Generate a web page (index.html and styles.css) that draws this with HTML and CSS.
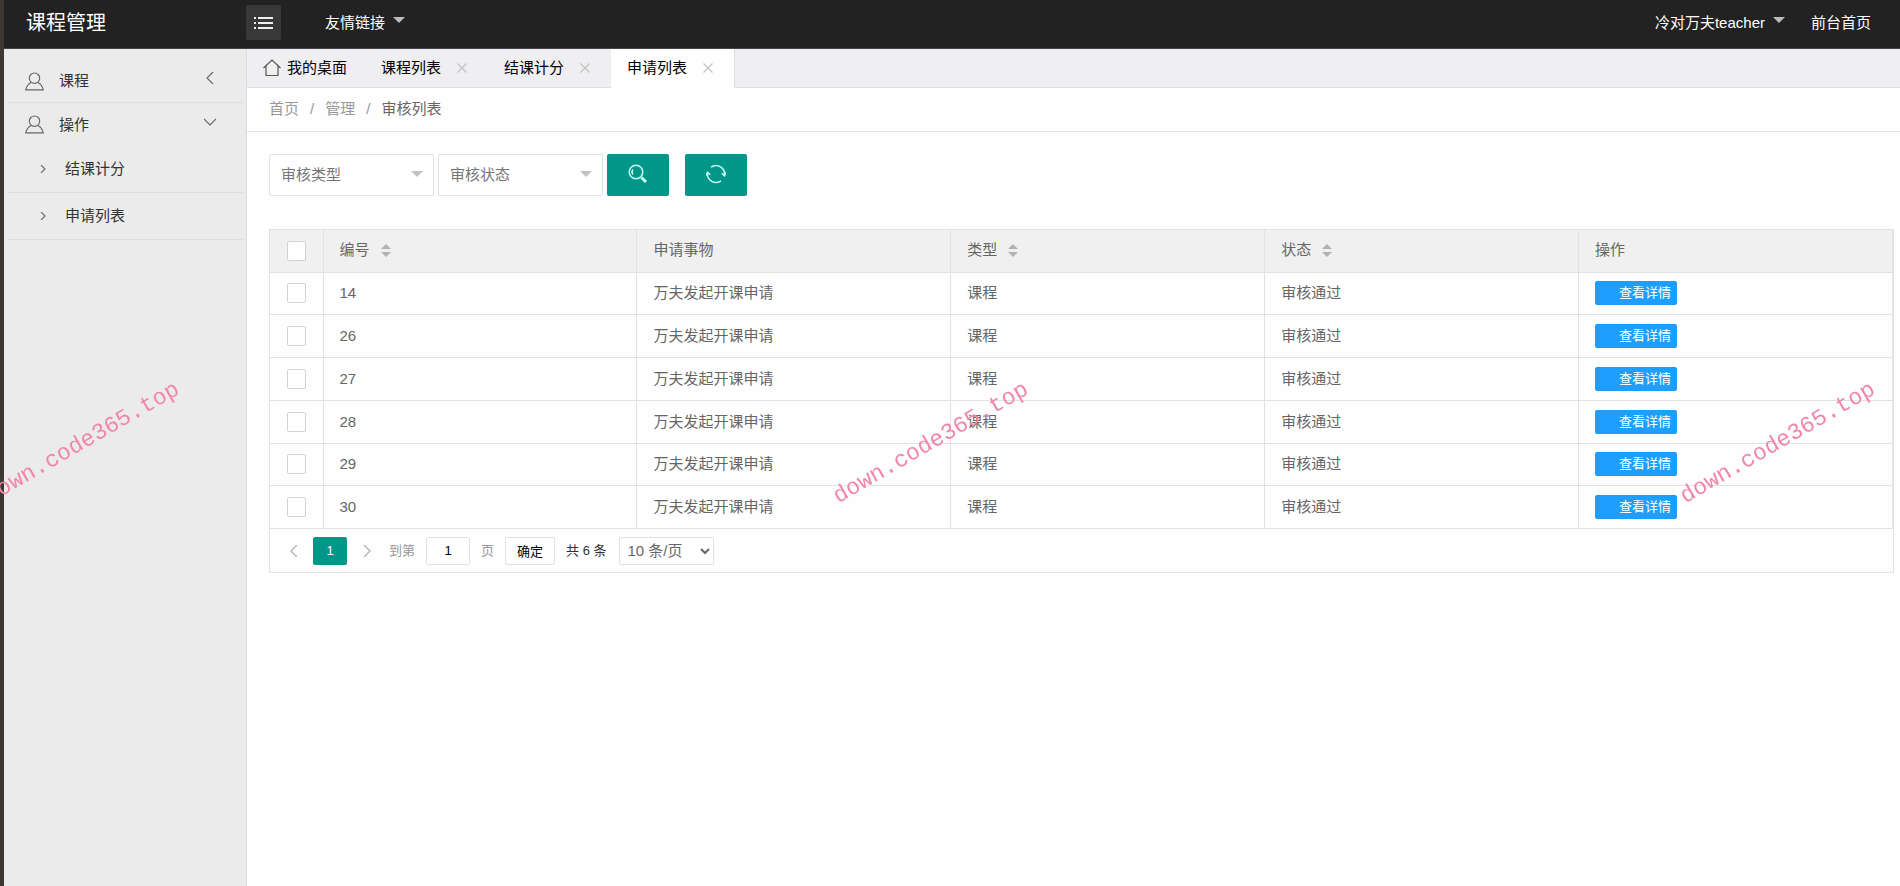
FILE: index.html
```html
<!DOCTYPE html>
<html lang="zh-CN">
<head>
  <meta charset="UTF-8" />
  <meta name="viewport" content="width=device-width, initial-scale=1.0"/>
  <title>课程管理</title>
  <link rel="stylesheet" href="styles.css">
</head>
<body>

<!-- Icons -->
<svg class="sprite" aria-hidden="true">
  <symbol id="user" viewBox="0 0 20 20">
    <circle cx="10" cy="6.500" r="5.500"/>
    <path d="M6.500 11C3.500 12.500 1.500 15 .8 18.800h18.400c-.7-3.800-2.700-6.300-5.700-7.800"/>
  </symbol>
  <symbol id="left" viewBox="0 0 12 12"><path d="M9 0L3 6l6 6"/></symbol>
  <symbol id="right" viewBox="0 0 12 12"><path d="M3 0l6 6-6 6"/></symbol>
  <symbol id="down" viewBox="0 0 12 12"><path d="M0 3l6 6 6-6"/></symbol>
  <symbol id="close" viewBox="0 0 10 10"><path d="M.5.5l9 9M9.500.5l-9 9"/></symbol>
</svg>

<!-- Header -->
<header class="header">
  <a class="logo" href="#">课程管理</a>
  <button class="menu-toggle" id="menuToggle" aria-label="展开菜单">
    <svg width="20" height="14" viewBox="0 0 20 14"><path d="M4 2h15M4 7h15M4 12h15M0 2h2M0 7h2M0 12h2"/></svg>
  </button>
  <a class="nav-link" href="#">友情链接<i class="caret"></i></a>
  <nav class="nav-right">
    <a class="nav-link" href="#">冷对万夫teacher<i class="caret"></i></a>
    <a class="nav-link" href="#">前台首页</a>
  </nav>
</header>

<div class="layout">
  <!-- Sidebar -->
  <aside class="sidebar" id="sidebar">
    <a class="menu-item line" href="#">
      <svg class="icon user"><use href="#user"/></svg>课程
      <svg class="icon arrow"><use href="#left"/></svg>
    </a>
    <a class="menu-item" href="#">
      <svg class="icon user"><use href="#user"/></svg>操作
      <svg class="icon arrow"><use href="#down"/></svg>
    </a>
    <a class="sub-item" href="#"><svg class="icon small"><use href="#right"/></svg>结课计分</a>
    <a class="sub-item" href="#"><svg class="icon small"><use href="#right"/></svg>申请列表</a>
  </aside>

  <main class="main">
    <!-- Tabs -->
    <div class="tabs">
      <div class="tab home">
        <svg class="icon house" viewBox="0 0 18 18"><path d="M.5 9L9 1l8.500 8M3 7v9.500h12V7"/></svg>
        <a href="#">我的桌面</a>
      </div>
      <div class="tab"><a href="#">课程列表</a><button aria-label="关闭"><svg class="icon close"><use href="#close"/></svg></button></div>
      <div class="tab"><a href="#">结课计分</a><button aria-label="关闭"><svg class="icon close"><use href="#close"/></svg></button></div>
      <div class="tab active"><a href="#">申请列表</a><button aria-label="关闭"><svg class="icon close"><use href="#close"/></svg></button></div>
    </div>

    <!-- Breadcrumb -->
    <nav class="breadcrumb">
      <a href="#">首页</a><span>/</span><a href="#">管理</a><span>/</span><a class="current" href="#">审核列表</a>
    </nav>

    <div class="content">
      <!-- Search -->
      <form class="search" id="searchForm">
        <div class="select">
          <select aria-label="审核类型"><option>审核类型</option></select>
        </div>
        <div class="select">
          <select aria-label="审核状态"><option>审核状态</option></select>
        </div>
        <button class="btn" type="submit" aria-label="搜索">
          <svg width="20" height="20" viewBox="0 0 20 20"><circle cx="8" cy="8" r="6.800"/><path d="M5 5.500a4 4 0 0 0 0 5"/><path class="thick" d="M13.500 13.500l4.500 4.500"/></svg>
        </button>
        <button class="btn refresh" type="reset" aria-label="刷新">
          <svg width="20" height="20" viewBox="0 0 20 20"><path d="M5 3.200A8.500 8.500 0 0 1 18.400 11.500M15 16.800A8.500 8.500 0 0 1 1.600 8.500"/><path d="M15.800 9.200l2.600 2.600 1.400-3.300M4.200 10.800L1.600 8.200.2 11.500"/></svg>
        </button>
      </form>

      <!-- Table -->
      <div class="table-box">
        <table>
          <thead>
            <tr>
              <th class="check"><input type="checkbox" id="checkAll" aria-label="全选"></th>
              <th>编号<i class="sort"></i></th>
              <th>申请事物</th>
              <th>类型<i class="sort"></i></th>
              <th>状态<i class="sort"></i></th>
              <th>操作</th>
            </tr>
          </thead>
          <tbody>
            <tr>
              <td class="check"><input type="checkbox" aria-label="选择 14"></td>
              <td>14</td><td>万夫发起开课申请</td><td>课程</td><td>审核通过</td>
              <td><button class="detail">查看详情</button></td>
            </tr>
            <tr>
              <td class="check"><input type="checkbox" aria-label="选择 26"></td>
              <td>26</td><td>万夫发起开课申请</td><td>课程</td><td>审核通过</td>
              <td><button class="detail">查看详情</button></td>
            </tr>
            <tr>
              <td class="check"><input type="checkbox" aria-label="选择 27"></td>
              <td>27</td><td>万夫发起开课申请</td><td>课程</td><td>审核通过</td>
              <td><button class="detail">查看详情</button></td>
            </tr>
            <tr>
              <td class="check"><input type="checkbox" aria-label="选择 28"></td>
              <td>28</td><td>万夫发起开课申请</td><td>课程</td><td>审核通过</td>
              <td><button class="detail">查看详情</button></td>
            </tr>
            <tr>
              <td class="check"><input type="checkbox" aria-label="选择 29"></td>
              <td>29</td><td>万夫发起开课申请</td><td>课程</td><td>审核通过</td>
              <td><button class="detail">查看详情</button></td>
            </tr>
            <tr>
              <td class="check"><input type="checkbox" aria-label="选择 30"></td>
              <td>30</td><td>万夫发起开课申请</td><td>课程</td><td>审核通过</td>
              <td><button class="detail">查看详情</button></td>
            </tr>
          </tbody>
        </table>

        <!-- Pagination -->
        <div class="pager">
          <button class="page-arrow" aria-label="上一页"><svg class="icon"><use href="#left"/></svg></button>
          <button class="page-current">1</button>
          <button class="page-arrow" aria-label="下一页"><svg class="icon"><use href="#right"/></svg></button>
          <label class="skip">到第<input type="text" value="1">页</label>
          <button class="confirm">确定</button>
          <span class="count">共 6 条</span>
          <select class="limit" aria-label="每页条数"><option>10 条/页</option></select>
        </div>
      </div>
    </div>
  </main>
</div>

<div class="watermark">
  <span>down.code365.top</span>
  <span>down.code365.top</span>
  <span>down.code365.top</span>
</div>

<script>
  // Sidebar toggle
  document.getElementById("menuToggle").addEventListener("click", () => {
    document.getElementById("sidebar").classList.toggle("hidden");
  });

  // Select all rows
  document.getElementById("checkAll").addEventListener("change", function() {
    document.querySelectorAll("tbody input").forEach(box => box.checked = this.checked);
  });

  document.getElementById("searchForm").addEventListener("submit", e => e.preventDefault());
</script>

</body>
</html>
```

FILE: styles.css
```css
* { margin: 0; padding: 0; box-sizing: border-box; }
body {
  font-family: "Liberation Sans", "Noto Sans CJK SC", sans-serif;
  font-size: 15px;
  line-height: 22px;
  color: #666;
  background: #fefefe;
  border-left: 4px solid #3b3836;
  display: flex;
  flex-direction: column;
  min-height: 100vh;
}

a {
  color: inherit;
  text-decoration: none;
}

button, input, select {
  font-family: inherit;
}

button {
  cursor: pointer;
}

.sprite {
  display: none;
}

svg {
  fill: none;
  stroke: currentColor;
  stroke-width: 1.2;
}

.icon {
  width: 12px;
  height: 12px;
  flex: none;
  overflow: visible;
}

/* Header */
.header {
  height: 49px;
  padding: 0 29px 3px 22px;
  background: #222;
  border-bottom: 1px solid #444;
  color: #fff;
  display: flex;
  align-items: center;
}

.logo {
  width: 220px;
  font-size: 20px;
}

.menu-toggle {
  width: 35px;
  height: 35px;
  margin-right: 44px;
  background: #383838;
  border: none;
  border-radius: 2px;
  color: #eee;
  display: flex;
  align-items: center;
  justify-content: center;
}

.menu-toggle svg {
  stroke-width: 2;
}

.nav-link {
  display: flex;
  gap: 8px;
}

.nav-right {
  margin-left: auto;
  display: flex;
  gap: 26px;
}

.caret {
  height: 6px;
  margin-top: 5px;
  border: 6px solid transparent;
  border-top-color: #bbb;
}

/* Sidebar */
.layout {
  flex: 1;
  display: flex;
}

.sidebar {
  width: 243px;
  padding: 11px 3px 0 4px;
  background: #ebebeb;
  border-right: 1px solid #dcdcdc;
  color: #333;
}

.sidebar.hidden {
  display: none;
}

.menu-item {
  height: 43px;
  padding: 0 27px 0 17px;
  display: flex;
  align-items: center;
}

.line, .sub-item {
  border-bottom: 1px solid #dedede;
}

.user {
  width: 19px;
  height: 19px;
  margin-right: 15px;
  color: #666;
}

.arrow {
  margin-left: auto;
  margin-bottom: 6px;
  color: #666;
}

.sub-item {
  height: 47px;
  padding-left: 31px;
  display: flex;
  align-items: center;
  gap: 18px;
}

.small {
  width: 8px;
  height: 8px;
  color: #777;
  stroke-width: 2;
}

/* Tabs */
.main {
  flex: 1;
  min-width: 0;
}

.tabs {
  height: 39px;
  background: #efeef0;
  border-bottom: 1px solid #dfdfdf;
  color: #000;
  display: flex;
}

.tab {
  height: 39px;
  padding: 0 21px 2px 16px;
  display: flex;
  align-items: center;
  gap: 16px;
}

.tab button {
  background: none;
  border: none;
  color: #c2c2c2;
  display: flex;
}

.tab.home {
  gap: 6px;
  padding-right: 18px;
}

.tab.active {
  background: #fefefe;
  border-right: 1px solid #dfdfdf;
}

.house {
  width: 18px;
  height: 18px;
  color: #555;
}

.close {
  width: 10px;
  height: 10px;
}

/* Breadcrumb */
.breadcrumb {
  height: 44px;
  padding: 0 22px 2px;
  border-bottom: 1px solid #e2e2e2;
  color: #999;
  display: flex;
  align-items: center;
  gap: 11px;
}

.current {
  color: #666;
}

/* Search */
.content {
  padding: 22px 6px 22px 22px;
}

.search {
  display: flex;
  gap: 4px;
  margin-bottom: 33px;
}

.select {
  position: relative;
  width: 165px;
}

.select select {
  width: 100%;
  height: 42px;
  padding: 0 11px 2px;
  font-size: 15px;
  color: #757575;
  background: #fff;
  border: 1px solid #e2e2e2;
  border-radius: 2px;
  appearance: none;
}

.select::after {
  content: "";
  position: absolute;
  right: 11px;
  top: 17px;
  border: 6px solid transparent;
  border-top-color: #c2c2c2;
  pointer-events: none;
}

.btn {
  width: 62px;
  height: 42px;
  padding-bottom: 3px;
  background: #009688;
  border: none;
  border-radius: 2px;
  color: #c8fff4;
  display: flex;
  align-items: center;
  justify-content: center;
}

.btn svg {
  stroke-width: 1.5;
}

.btn .thick {
  stroke-width: 3;
}

.refresh {
  margin-left: 12px;
}

/* Table */
.table-box {
  border: 1px solid #e2e2e2;
}

table {
  width: 100%;
  min-width: 700px;
  height: 299px;
  table-layout: fixed;
  border-collapse: collapse;
}

th, td {
  height: 42px;
  padding: 0 16px;
  border-right: 1px solid #e2e2e2;
  border-bottom: 1px solid #e2e2e2;
  font-weight: normal;
  text-align: left;
}

th {
  padding-bottom: 2px;
  background: #f0f0f0;
}

.check {
  width: 53px;
  padding: 0 0 2px;
  text-align: center;
}

.check input {
  width: 19px;
  height: 20px;
  background: #fff;
  border: 1px solid #d2d2d2;
  border-radius: 2px;
  appearance: none;
  vertical-align: middle;
}

.check input:checked {
  background: #009688;
}

.sort {
  display: inline-flex;
  flex-direction: column;
  gap: 3px;
  margin-left: 11px;
  vertical-align: middle;
}

.sort::before, .sort::after {
  content: "";
  border: 5px solid transparent;
}

.sort::before {
  border-top: none;
  border-bottom-color: #b2b2b2;
}

.sort::after {
  border-bottom: none;
  border-top-color: #b2b2b2;
}

.detail {
  height: 24px;
  padding: 0 6px 0 24px;
  background: #1e9fff;
  border: none;
  border-radius: 2px;
  color: #fff;
  font-size: 13px;
  line-height: 22px;
  vertical-align: middle;
}

/* Pagination */
.pager {
  height: 43px;
  padding: 0 17px;
  font-size: 13px;
  display: flex;
  align-items: center;
}

.page-arrow {
  width: 14px;
  background: none;
  border: none;
  color: #bbb;
  display: flex;
  justify-content: center;
}

.page-arrow .icon {
  stroke-width: 1.5;
}

.page-current {
  width: 34px;
  height: 28px;
  margin: 0 13px 0 12px;
  background: #009688;
  border: none;
  border-radius: 2px;
  color: #fff;
  font-size: 13px;
}

.skip {
  margin: 0 11px 0 15px;
  color: #999;
  display: flex;
  align-items: center;
  gap: 11px;
}

.skip input, .confirm, .limit {
  height: 28px;
  background: #fff;
  border: 1px solid #e2e2e2;
  border-radius: 2px;
  color: #000;
  font-size: 13px;
}

.skip input {
  width: 44px;
  text-align: center;
}

.confirm {
  width: 50px;
}

.count {
  margin: 0 12px 0 11px;
  color: #333;
}

.limit {
  width: 95px;
  padding-left: 4px;
  color: #666;
  font-size: 15px;
}

/* Watermark */
.watermark {
  position: fixed;
  inset: 0;
  overflow: hidden;
  pointer-events: none;
}

.watermark span {
  position: absolute;
  top: 50%;
  left: 49%;
  color: #f286a8;
  font-family: "Liberation Mono", monospace;
  font-size: 23px;
  transform: translate(-50%, -50%) rotate(-30deg);
}

.watermark span:first-child {
  left: 82px;
}

.watermark span:last-child {
  left: auto;
  right: 122px;
  transform: translate(50%, -50%) rotate(-30deg);
}
```
